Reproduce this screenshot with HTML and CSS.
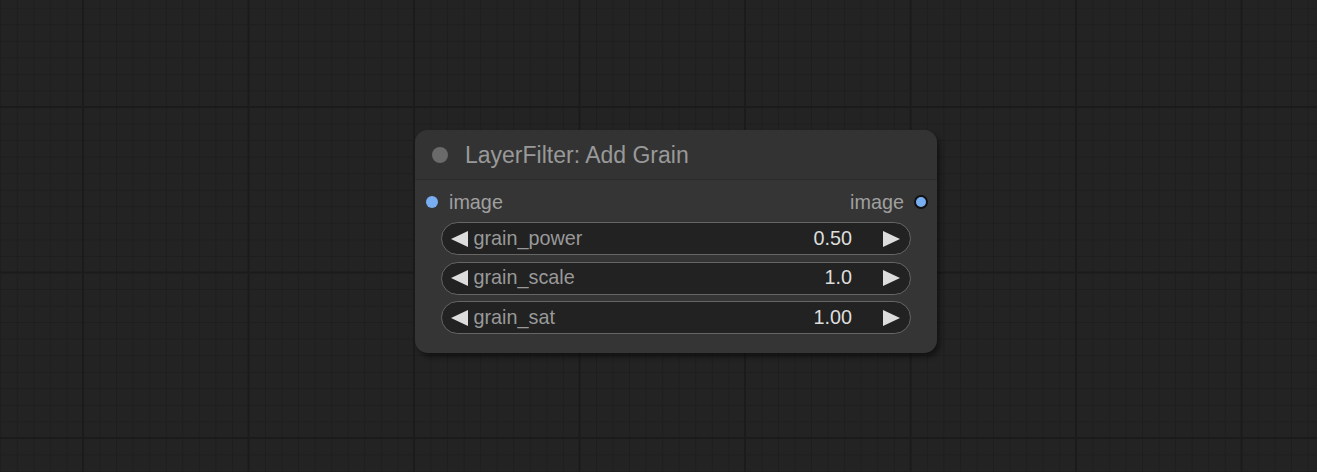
FILE: index.html
```html
<!DOCTYPE html>
<html>
<head>
<meta charset="utf-8">
<link rel="stylesheet" href="styles.css">
</head>
<body>
<div class="canvas">
  <div class="node">
    <div class="title">
      <span class="title-dot"></span>
      <span class="title-text">LayerFilter: Add Grain</span>
    </div>
    <div class="body">
      <div class="slots">
        <div class="slot in"><span class="dot"></span><span>image</span></div>
        <div class="slot out"><span>image</span><span class="dot out-dot"></span></div>
      </div>
      <div class="widgets">
        <div class="widget">
          <svg class="arrow" width="17" height="16" viewBox="0 0 17 16"><polygon points="0,8 17,0 17,16" fill="#ddd"/></svg>
          <span class="label">grain_power</span>
          <span class="value">0.50</span>
          <svg class="arrow right" width="17" height="16" viewBox="0 0 17 16"><polygon points="0,0 17,8 0,16" fill="#ddd"/></svg>
        </div>
        <div class="widget">
          <svg class="arrow" width="17" height="16" viewBox="0 0 17 16"><polygon points="0,8 17,0 17,16" fill="#ddd"/></svg>
          <span class="label">grain_scale</span>
          <span class="value">1.0</span>
          <svg class="arrow right" width="17" height="16" viewBox="0 0 17 16"><polygon points="0,0 17,8 0,16" fill="#ddd"/></svg>
        </div>
        <div class="widget">
          <svg class="arrow" width="17" height="16" viewBox="0 0 17 16"><polygon points="0,8 17,0 17,16" fill="#ddd"/></svg>
          <span class="label">grain_sat</span>
          <span class="value">1.00</span>
          <svg class="arrow right" width="17" height="16" viewBox="0 0 17 16"><polygon points="0,0 17,8 0,16" fill="#ddd"/></svg>
        </div>
      </div>
    </div>
  </div>
</div>
</body>
</html>
```

FILE: styles.css
```css
html, body {
  margin: 0;
  padding: 0;
  width: 100%;
  height: 100%;
  overflow: hidden;
}
body {
  font-family: "Liberation Sans", Arial, sans-serif;
  background: #222222;
}
.canvas {
  position: relative;
  width: 1317px;
  height: 472px;
  background-color: #232323;
  background-image:
    linear-gradient(to right, #1b1b1b 2px, transparent 2px),
    linear-gradient(to bottom, #1b1b1b 2px, transparent 2px),
    linear-gradient(to right, #1e1e1e 1px, transparent 1px),
    linear-gradient(to bottom, #1e1e1e 1px, transparent 1px);
  background-size: 165.5px 165.5px, 165.5px 165.5px, 16.55px 16.55px, 16.55px 16.55px;
  background-position: 82px 0, 0 106px, 83px 0, 0 107px;
}
.node {
  position: absolute;
  left: 415px;
  top: 130px;
  width: 522px;
  height: 223px;
  background: #353535;
  border-radius: 13px;
  box-shadow: 3px 4px 5px rgba(0, 0, 0, 0.45);
  display: flex;
  flex-direction: column;
  overflow: hidden;
}
.title {
  height: 49px;
  background: #333333;
  border-bottom: 1px solid #2b2b2b;
  display: flex;
  align-items: center;
  padding-left: 17px;
  box-sizing: content-box;
}
.title-dot {
  width: 16px;
  height: 16px;
  border-radius: 50%;
  background: #6a6a6a;
  flex: none;
}
.title-text {
  margin-left: 17px;
  font-size: 23px;
  color: #999999;
  line-height: 1;
  position: relative;
  top: 1px;
}
.body {
  flex: 1;
  display: flex;
  flex-direction: column;
}
.slots {
  height: 39px;
  display: flex;
  justify-content: space-between;
  align-items: center;
  padding: 3px 9px 0 11px;
}
.slot {
  display: flex;
  align-items: center;
  font-size: 19.8px;
  color: #a0a0a0;
  line-height: 1;
}
.slot .dot {
  width: 12px;
  height: 12px;
  border-radius: 50%;
  background: #7aaef2;
  flex: none;
}
.slot.in .dot {
  margin-right: 11px;
}
.slot.out .dot {
  margin-left: 10px;
}
.slot .out-dot {
  width: 14px;
  height: 14px;
  box-sizing: border-box;
  border: 2px solid #111;
}
.widgets {
  display: flex;
  flex-direction: column;
  gap: 6.6px;
  padding: 0 26px;
}
.widget {
  height: 33px;
  box-sizing: border-box;
  border: 1.5px solid #666666;
  border-radius: 17px;
  background: #222222;
  display: flex;
  align-items: center;
  padding: 0 10px 0 8.5px;
  font-size: 19.8px;
  line-height: 1;
}
.arrow {
  flex: none;
}
.label {
  margin-left: 6px;
  color: #999999;
  flex: 1;
}
.value {
  color: #dddddd;
  margin-right: 31px;
}
```
